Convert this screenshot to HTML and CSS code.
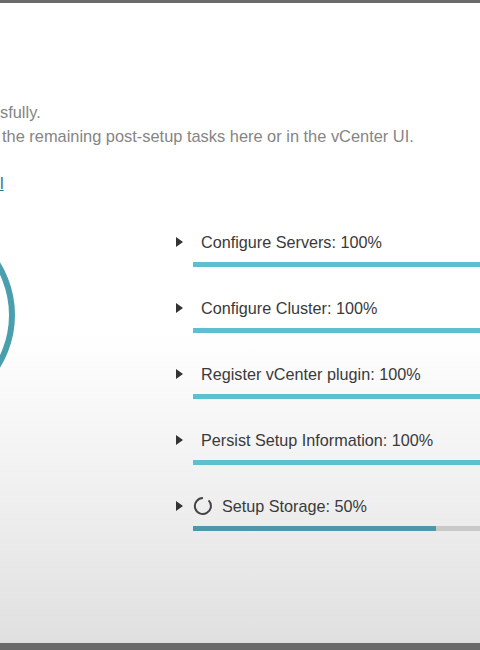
FILE: index.html
```html
<!DOCTYPE html>
<html lang="en">
<head>
    <meta charset="UTF-8">
    <meta name="viewport" content="width=device-width, initial-scale=1.0">
    <title>Setup Progress</title>
    <link rel="stylesheet" href="styles.css">
</head>
<body>

<div class="topbar"></div>

<div class="msg">
    <p class="line first">sfully.</p>
    <p class="line second">the remaining post-setup tasks here or in the vCenter UI.</p>
    <p class="line link"><a href="#">l</a></p>
</div>

<div class="main">
    <div class="dial">
        <div class="ring"></div>
    </div>

    <div class="tasks">
        <div class="task">
            <div class="head"><span class="caret"></span><span class="label">Configure Servers: 100%</span></div>
            <div class="bar"><div class="fill" style="width: 100%"></div></div>
        </div>
        <div class="task">
            <div class="head"><span class="caret"></span><span class="label">Configure Cluster: 100%</span></div>
            <div class="bar"><div class="fill" style="width: 100%"></div></div>
        </div>
        <div class="task">
            <div class="head"><span class="caret"></span><span class="label">Register vCenter plugin: 100%</span></div>
            <div class="bar"><div class="fill" style="width: 100%"></div></div>
        </div>
        <div class="task">
            <div class="head"><span class="caret"></span><span class="label">Persist Setup Information: 100%</span></div>
            <div class="bar"><div class="fill" style="width: 100%"></div></div>
        </div>
        <div class="task running">
            <div class="head">
                <span class="caret"></span>
                <svg class="spinner" width="20" height="20" viewBox="0 0 20 20">
                    <path d="M15.6 4.4 A8 8 0 1 1 10 2" fill="none" stroke="#444" stroke-width="2"/>
                </svg>
                <span class="label">Setup Storage: 50%</span>
            </div>
            <div class="bar"><div class="fill" style="width: 243px"></div></div>
        </div>
    </div>
</div>

<div class="bottombar"></div>

</body>
</html>
```

FILE: styles.css
```css
html, body {
    margin: 0;
    padding: 0;
}
body {
    width: 480px;
    height: 650px;
    overflow: hidden;
    display: flex;
    flex-direction: column;
    font-family: "Liberation Sans", Arial, sans-serif;
    background: linear-gradient(to bottom, #ffffff 0, #ffffff 330px, #f2f2f2 470px, #e0e0e0 643px);
}
.topbar {
    height: 3px;
    background-color: #6b6b6b;
}
.msg {
    margin-top: 97px;
}
.line {
    margin: 0;
    font-size: 16.4px;
    line-height: 24px;
    color: #858585;
    white-space: nowrap;
}
.second {
    padding-left: 2px;
}
.link {
    margin-top: 23px;
}
.link a {
    color: #2f7390;
    text-decoration: underline;
}
.main {
    display: flex;
    margin-top: 20px;
}
.dial {
    width: 176px;
    flex-shrink: 0;
    overflow: hidden;
}
.ring {
    width: 188px;
    height: 188px;
    margin-left: -185px;
    border: 6px solid #4a9fae;
    border-radius: 50%;
}
.tasks {
    flex: 1;
    padding-top: 17px;
    overflow: hidden;
}
.task {
    margin-bottom: 31px;
}
.head {
    display: flex;
    align-items: center;
    height: 20px;
    color: #3a3a3a;
    font-size: 16.2px;
    white-space: nowrap;
}
.caret {
    width: 0;
    height: 0;
    border-left: 7px solid #333;
    border-top: 5.5px solid transparent;
    border-bottom: 5.5px solid transparent;
    margin-right: 18px;
}
.running .caret {
    margin-right: 10px;
}
.spinner {
    margin-right: 9px;
    flex-shrink: 0;
}
.bar {
    margin-top: 10px;
    margin-left: 17px;
    width: 300px;
    height: 5px;
    background-color: #c9c9c9;
}
.fill {
    height: 100%;
    background-color: #5ec0cc;
}
.running .fill {
    background-color: #4a98a8;
}
.bottombar {
    margin-top: auto;
    height: 7px;
    background-color: #6a6a6a;
}
```
